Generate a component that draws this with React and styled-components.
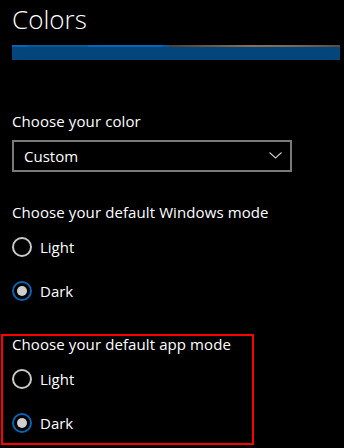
import React from 'react';
import styled, { createGlobalStyle } from 'styled-components';

const GlobalStyle = createGlobalStyle`
  html, body {
    margin: 0;
    padding: 0;
    background: #000;
  }
  body {
    font-family: "Open Sans", "Noto Sans", sans-serif;
    color: #fff;
  }
`

const Page = styled.div`
  width: 344px;
  height: 448px;
  overflow: hidden;
  background: #000;
  padding: 3px 0 0 12px;
  box-sizing: border-box;
`

const Title = styled.h1`
  margin: 0;
  font-size: 26px;
  font-weight: 300;
  line-height: 32px;
`

const Banner = styled.div`
  margin-top: 10px;
  width: 328px;
  height: 15px;
  display: flex;
  flex-direction: column;
  background: #04457c;
`

const BannerEdge = styled.div`
  height: 2px;
  background: linear-gradient(
    to right,
    #0a63b0 0px, #0a63b0 16px,
    #08589c 16px, #08589c 76px,
    #0a66b4 76px, #0a66b4 150px,
    #08589c 150px, #08589c 157px,
    #4d4136 157px,
    #6e5a44 200px,
    #8a7152 240px,
    #7d6a55 280px,
    #5b4c40 328px
  );
`

const Label = styled.div`
  font-size: 15px;
  line-height: 16px;
  color: #fff;
  letter-spacing: 0.1px;
`

const ColorBlock = styled.section`
  margin-top: 53px;
`

const Select = styled.div`
  margin-top: 11px;
  width: 280px;
  height: 32px;
  box-sizing: border-box;
  border: 2px solid #7a7a7a;
  display: flex;
  align-items: center;
  justify-content: space-between;
  padding: 0 8px 1px 10px;
  font-size: 15px;
`

const ModeBlock = styled.section`
  margin-top: ${p => p.$top}px;
  ${p => p.$highlight && `
    margin-left: -11px;
    width: 253px;
    box-sizing: border-box;
    border: 2px solid #ff0000;
    padding: 0 0 9px 9px;
  `}
`

const Options = styled.div`
  margin-top: 16px;
  display: flex;
  flex-direction: column;
  gap: 22px;
`

const Option = styled.label`
  display: flex;
  align-items: center;
  gap: 8px;
  height: 22px;
  font-size: 15px;
`

const Ring = styled.span`
  width: 20px;
  height: 20px;
  box-sizing: border-box;
  border-radius: 50%;
  border: 2px solid ${p => (p.$on ? '#0a63b0' : '#c8c8c8')};
  display: flex;
  align-items: center;
  justify-content: center;
  &::after {
    content: '';
    width: 10px;
    height: 10px;
    border-radius: 50%;
    background: #cfcfcf;
    display: ${p => (p.$on ? 'block' : 'none')};
  }
`

function Chevron() {
  return (
    <svg width="13" height="7" viewBox="0 0 13 7">
      <path d="M0.5 0.5 L6.5 6 L12.5 0.5" fill="none" stroke="#c8c8c8" strokeWidth="1.1" />
    </svg>
  )
}

function Mode({ title, top, highlight }) {
  return (
    <ModeBlock $top={top} $highlight={highlight}>
      <Label>{title}</Label>
      <Options>
        <Option><Ring />Light</Option>
        <Option><Ring $on />Dark</Option>
      </Options>
    </ModeBlock>
  )
}

export default function App() {
  return (
    <Page>
      <GlobalStyle />
      <Title>Colors</Title>
      <Banner>
        <BannerEdge />
      </Banner>
      <ColorBlock>
        <Label>Choose your color</Label>
        <Select>
          <span>Custom</span>
          <Chevron />
        </Select>
      </ColorBlock>
      <Mode title="Choose your default Windows mode" top={32} />
      <Mode title="Choose your default app mode" top={32} highlight />
    </Page>
  )
}
